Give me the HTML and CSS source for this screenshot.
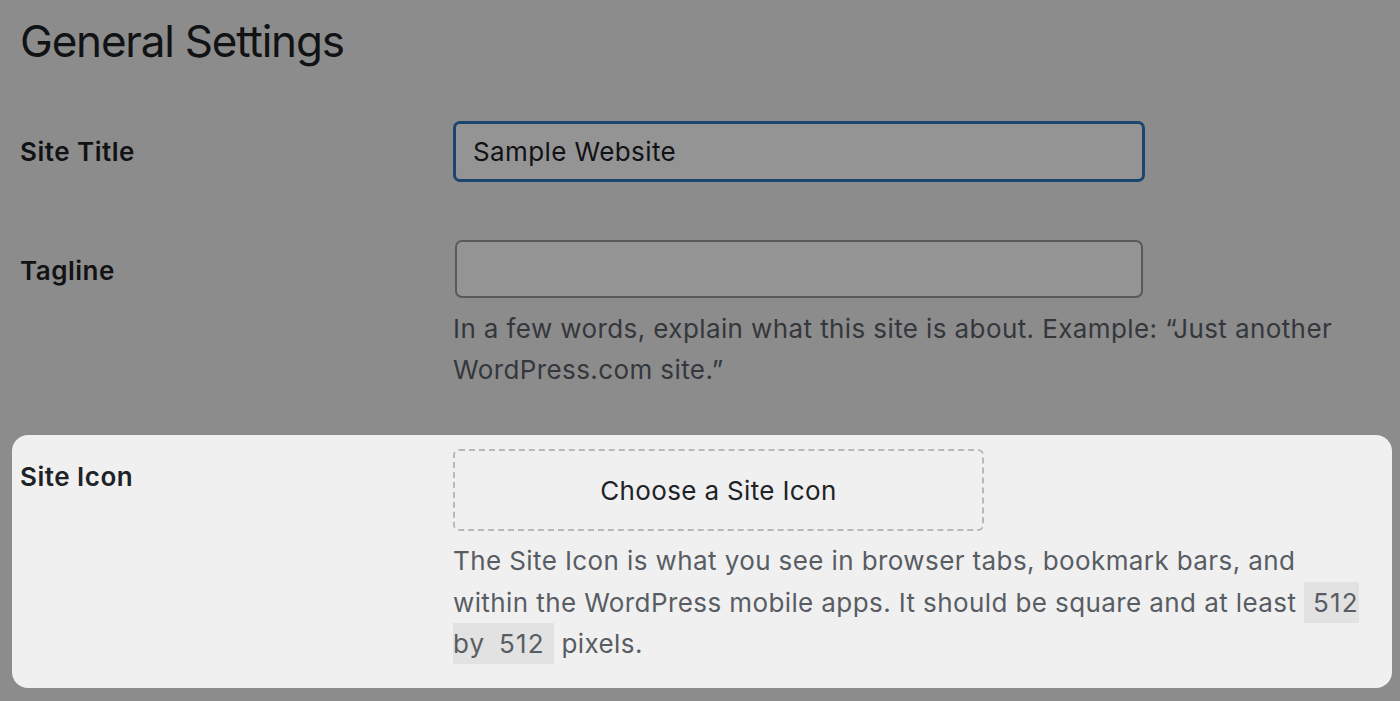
FILE: index.html
```html
<!DOCTYPE html>
<html lang="en">
<head>
<meta charset="utf-8">
<title>General Settings</title>
<link rel="stylesheet" href="styles.css">
</head>
<body>
<div class="page">
  <h1 class="title">General Settings</h1>

  <div class="row row-title">
    <div class="label">Site Title</div>
    <div class="field">
      <div class="input input-focus">Sample Website</div>
    </div>
  </div>

  <div class="row row-tagline">
    <div class="label">Tagline</div>
    <div class="field">
      <div class="input input-plain"></div>
      <p class="desc desc-dim">In a few words, explain what this site is about. Example: “Just another WordPress.com site.”</p>
    </div>
  </div>

  <div class="row row-icon">
    <div class="label label-icon">Site Icon</div>
    <div class="field">
      <div class="choose">Choose a Site Icon</div>
      <p class="desc desc-light">The Site Icon is what you see in browser tabs, bookmark bars, and within the WordPress mobile apps. It should be square and at least <code class="code">512 by 512</code> pixels.</p>
    </div>
  </div>
</div>
</body>
</html>
```

FILE: styles.css
```css
html, body {
  margin: 0;
  padding: 0;
}

body {
  background: #8c8c8c;
  font-family: Inter, "Noto Sans", sans-serif;
  color: #111214;
  width: 1400px;
  height: 701px;
  overflow: hidden;
}

.page {
  padding: 0 8px 0 12px;
}

.title {
  margin: 0;
  padding: 14px 8px 0;
  font-size: 44px;
  line-height: 54px;
  font-weight: 400;
  letter-spacing: -1.2px;
  color: #111214;
}

.row {
  display: grid;
  grid-template-columns: 433px 1fr;
  padding: 0 8px;
}

.row-title {
  margin-top: 53px;
}

.row-tagline {
  margin-top: 58px;
}

.label {
  font-size: 26px;
  font-weight: 600;
  line-height: 61px;
  letter-spacing: 0.5px;
  color: #111214;
}

.field {
  display: flex;
  flex-direction: column;
  align-items: flex-start;
}

.input {
  box-sizing: border-box;
  border-radius: 7px;
  font-size: 26px;
  letter-spacing: 0.4px;
  display: flex;
  align-items: center;
}

.input-focus {
  width: 692px;
  height: 61px;
  border: 3px solid #1b4670;
  background: #949494;
  padding-left: 17px;
  color: #111214;
}

.input-plain {
  width: 688px;
  height: 58px;
  margin-left: 2px;
  border: 2px solid #57595b;
  background: #949494;
}

.desc {
  margin: 10px 0 0;
  width: 918px;
  font-size: 26px;
  line-height: 41px;
  letter-spacing: 0.4px;
}

.desc-dim {
  color: #34383c;
}

.row-icon {
  margin-top: 45px;
  background: #f0f0f0;
  border-radius: 16px;
  padding-top: 14px;
  padding-bottom: 23px;
}

.label-icon {
  margin-top: 9px;
  line-height: 38px;
  color: #1d2327;
}

.choose {
  box-sizing: border-box;
  width: 531px;
  height: 82px;
  border: 2px dashed #b8b8b8;
  border-radius: 6px;
  display: flex;
  align-items: center;
  justify-content: center;
  font-size: 26px;
  letter-spacing: 0.35px;
  color: #1d2327;
}

.desc-light {
  margin-top: 9px;
  color: #585d64;
  line-height: 41.5px;
}

.code {
  font-family: inherit;
  font-size: inherit;
  background: #e2e2e2;
  padding: 5px 9px 5px 9px;
  letter-spacing: 1.2px;
  word-spacing: 5px;
}
```
